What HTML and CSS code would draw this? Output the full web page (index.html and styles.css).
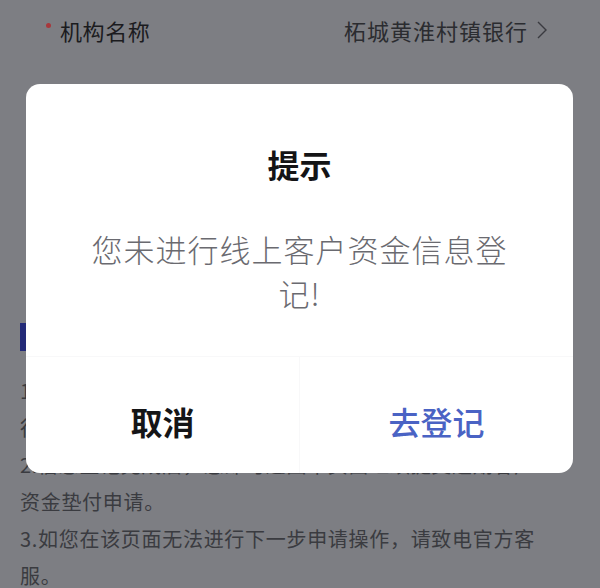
FILE: index.html
```html
<!DOCTYPE html>
<html lang="zh-CN">
<head>
<meta charset="utf-8">
<title>提示</title>
<link rel="stylesheet" href="styles.css">
</head>
<body>
<div class="page">
  <div class="field field-first">
    <span class="req"></span>
    <span class="label">机构名称</span>
    <span class="value">柘城黄淮村镇银行</span>
    <svg class="chev" width="12" height="20" viewBox="0 0 12 20"><path d="M2 2 L10 10 L2 18" fill="none" stroke="#3a3b40" stroke-width="1.4"/></svg>
  </div>
  <div class="field">
    <span class="req"></span>
    <span class="label">申请金额</span>
    <span class="value">请输入</span>
  </div>
  <div class="field">
    <span class="req"></span>
    <span class="label">联系电话</span>
    <span class="value">请输入</span>
  </div>
  <div class="field">
    <span class="req"></span>
    <span class="label">证件号码</span>
    <span class="value">请输入</span>
  </div>
  <div class="section">
    <span class="bar"></span>
    <span class="section-title">温馨提示</span>
  </div>
  <div class="notes">
    <p>1.请您先完成线上客户资金信息登记，登记成功后方可进行后续业务办理。</p>
    <p>2.信息登记完成后，您即可返回本页面继续提交逾期客户资金垫付申请。</p>
    <p>3.如您在该页面无法进行下一步申请操作，请致电官方客服。</p>
  </div>
</div>
<div class="dialog">
  <div class="dialog-title">提示</div>
  <div class="dialog-msg">您未进行线上客户资金信息登记!</div>
  <div class="dialog-btns">
    <div class="btn btn-cancel">取消</div>
    <div class="btn btn-ok">去登记</div>
  </div>
</div>
</body>
</html>
```

FILE: styles.css
```css
html, body {
  margin: 0;
  padding: 0;
}
body {
  width: 600px;
  height: 588px;
  overflow: hidden;
  background: #7d7e83;
  font-family: "Noto Sans CJK SC", "Noto Sans", sans-serif;
  position: relative;
}
.page {
  display: flex;
  flex-direction: column;
}
.field {
  height: 64px;
  display: flex;
  align-items: center;
  padding: 0 52px 0 46px;
}
.field-first {
  height: 60px;
  padding-bottom: 4px;
}
.req {
  width: 5px;
  height: 5px;
  border-radius: 50%;
  background: #a8383c;
  margin-right: 9px;
  transform: translateY(-5px);
}
.label {
  font-size: 22px;
  line-height: 30px;
  color: #1b1b1e;
  letter-spacing: 0.6px;
}
.value {
  margin-left: auto;
  font-size: 22px;
  line-height: 30px;
  color: #2b2c30;
  letter-spacing: 1px;
}
.chev {
  margin-left: 8px;
}
.section {
  margin-top: 67px;
  height: 28px;
  display: flex;
  align-items: center;
  padding-left: 20px;
}
.bar {
  width: 7px;
  height: 28px;
  background: #232a78;
}
.section-title {
  margin-left: 12px;
  font-size: 22px;
  color: #1b1b1e;
}
.notes {
  margin-top: 21px;
  padding: 0 50px 0 20px;
}
.notes p {
  margin: 0;
  font-size: 20px;
  line-height: 37px;
  letter-spacing: 0.7px;
  color: #3a3b40;
}
.dialog {
  position: absolute;
  left: 26px;
  top: 84px;
  width: 547px;
  height: 389px;
  background: #ffffff;
  border-radius: 14px;
  display: flex;
  flex-direction: column;
  overflow: hidden;
}
.dialog-title {
  margin-top: 60px;
  text-align: center;
  font-size: 32px;
  line-height: 40px;
  font-weight: 700;
  color: #141416;
}
.dialog-msg {
  margin: 43px 49px 0;
  text-align: center;
  font-size: 31px;
  line-height: 44px;
  letter-spacing: 1px;
  font-weight: 300;
  color: #6a6a70;
}
.dialog-btns {
  margin-top: auto;
  height: 116px;
  display: flex;
  border-top: 1px solid #f8f8f9;
}
.btn {
  flex: 1;
  padding-top: 44px;
  text-align: center;
  font-size: 32px;
  line-height: 40px;
}
.btn-cancel {
  color: #151517;
  font-weight: 700;
  border-right: 1px solid #f8f8f9;
}
.btn-ok {
  color: #4a63c4;
  font-weight: 500;
}
```
